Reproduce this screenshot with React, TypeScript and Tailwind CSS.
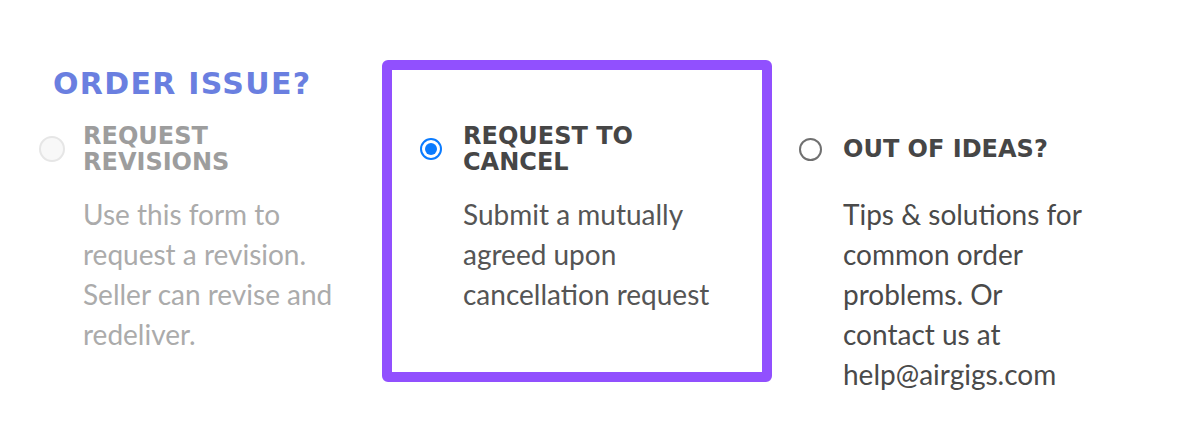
import React from "react";

const head = "font-['DejaVu_Sans',sans-serif] font-bold uppercase";
const body = "font-['Lato',sans-serif]";

export default function App() {
  return (
    <div className="w-[1184px] h-[424px] bg-white flex items-start pt-[60px]">
      {/* Left column */}
      <div className="ml-[39px] w-[300px] pt-[6px] flex flex-col">
        <h2 className={`${head} ml-[14px] text-[30px] leading-[36px] text-[#6a7fe0] tracking-[1.3px]`}>
          Order issue?
        </h2>
        <div className="mt-[21px] flex items-center h-[52px] gap-[18px]">
          <span className="w-[26px] h-[26px] rounded-full border-2 border-[#e6e6e6] bg-[#f8f8f8] shrink-0" />
          <div className={`${head} text-[24px] leading-[26px] text-[#9d9d9d] w-[200px]`}>
            Request revisions
          </div>
        </div>
        <p className={`${body} mt-[19px] ml-[44px] w-[258px] text-[28px] leading-[40px] text-[#ababab]`}>
          Use this form to request a revision. Seller can revise and redeliver.
        </p>
      </div>

      {/* Center card */}
      <div className="ml-[43px] w-[390px] h-[322px] border-[10px] border-[#9150fe] rounded-[6px] pt-[53px] pl-[28px]">
        <div className="flex items-center h-[52px] gap-[21px]">
          <span className="w-[22px] h-[22px] rounded-full border-2 border-[#0a7bff] p-[3px] shrink-0 flex">
            <span className="w-full h-full rounded-full bg-[#0a7bff]" />
          </span>
          <div className={`${head} text-[24px] leading-[26px] text-[#464646] w-[200px]`}>
            Request to cancel
          </div>
        </div>
        <p className={`${body} mt-[19px] ml-[43px] w-[258px] text-[28px] leading-[40px] text-[#555555]`}>
          Submit a mutually agreed upon cancellation request
        </p>
      </div>

      {/* Right column */}
      <div className="ml-[27px] w-[300px] pt-[63px] flex flex-col">
        <div className="flex items-center h-[52px] gap-[21px]">
          <span className="w-[23px] h-[23px] rounded-full border-2 border-[#707070] shrink-0" />
          <div className={`${head} text-[24px] leading-[26px] text-[#464646] whitespace-nowrap`}>
            Out of ideas?
          </div>
        </div>
        <p className={`${body} mt-[19px] ml-[44px] w-[240px] text-[28px] leading-[40px] text-[#4a4a4a]`}>
          Tips &amp; solutions for common order problems. Or contact us at help@airgigs.com
        </p>
      </div>
    </div>
  );
}
